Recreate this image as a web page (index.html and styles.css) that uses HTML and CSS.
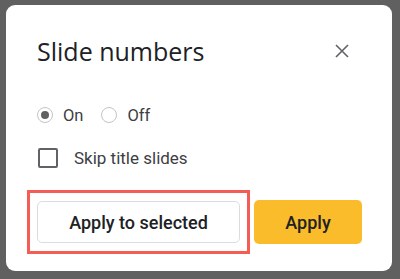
FILE: index.html
```html
<!DOCTYPE html>
<html>
<head>
<meta charset="utf-8">
<link rel="stylesheet" href="styles.css">
</head>
<body>
<div class="frame">
  <div class="card">
    <div class="header">
      <h1 class="title">Slide numbers</h1>
      <svg class="close" width="14" height="14" viewBox="0 0 14 14"><path d="M1 1L13 13M13 1L1 13" stroke="#5f6368" stroke-width="1.6" fill="none"/></svg>
    </div>
    <div class="radios">
      <label class="opt"><span class="radio checked"></span><span>On</span></label>
      <label class="opt"><span class="radio"></span><span>Off</span></label>
    </div>
    <label class="check-row"><span class="checkbox"></span><span>Skip title slides</span></label>
    <div class="actions">
      <span class="highlight"><button class="btn secondary">Apply to selected</button></span>
      <button class="btn primary">Apply</button>
    </div>
  </div>
</div>
</body>
</html>
```

FILE: styles.css
```css
html, body {
  margin: 0;
  padding: 0;
  background: #606060;
}
.frame {
  box-sizing: border-box;
  width: 400px;
  height: 279px;
  padding: 5px 8px 8px 6px;
}
.card {
  box-sizing: border-box;
  height: 266px;
  background: #fff;
  border-radius: 9px;
  padding: 30px 30px 0 31px;
  font-family: Roboto, "Noto Sans", sans-serif;
  color: #202124;
}
.header {
  display: flex;
  align-items: center;
  justify-content: space-between;
  height: 32px;
}
.title {
  margin: 0;
  font-family: "Open Sans", Roboto, sans-serif;
  font-size: 25px;
  font-weight: 400;
  line-height: 32px;
  letter-spacing: 0;
}
.close {
  margin-right: 13px;
}
.radios {
  display: flex;
  margin-top: 36px;
  height: 24px;
  align-items: center;
}
.opt {
  display: flex;
  align-items: center;
  font-size: 16.5px;
  color: #3c4043;
}
.opt + .opt {
  margin-left: 18px;
}
.radio {
  box-sizing: border-box;
  width: 16px;
  height: 16px;
  border: 1.5px solid #c4c4c4;
  border-radius: 50%;
  margin-right: 10px;
  display: flex;
  align-items: center;
  justify-content: center;
}
.radio.checked::after {
  content: "";
  width: 8px;
  height: 8px;
  border-radius: 50%;
  background: #616161;
}
.check-row {
  display: flex;
  align-items: center;
  margin-top: 19px;
  height: 24px;
  font-size: 17px;
  color: #3c4043;
}
.checkbox {
  box-sizing: border-box;
  width: 20px;
  height: 20px;
  border: 2px solid #5f6368;
  border-radius: 2px;
  margin-left: 1px;
  margin-right: 16px;
}
.actions {
  display: flex;
  align-items: center;
  gap: 14px;
  margin-top: 30px;
}
.highlight {
  position: relative;
  display: flex;
}
.highlight::after {
  content: "";
  position: absolute;
  top: -11px;
  bottom: -11px;
  left: -10px;
  right: -10px;
  border: 3px solid #f45c56;
}
.btn {
  font-family: Roboto, "Noto Sans", sans-serif;
  font-size: 18px;
  font-weight: 500;
  color: #202124;
  border-radius: 5px;
  cursor: pointer;
}
.secondary {
  box-sizing: border-box;
  width: 203px;
  height: 42px;
  background: #fff;
  border: 1px solid #dadce0;
}
.primary {
  box-sizing: border-box;
  width: 108px;
  height: 44px;
  background: #fbbc2c;
  border: none;
}
```
